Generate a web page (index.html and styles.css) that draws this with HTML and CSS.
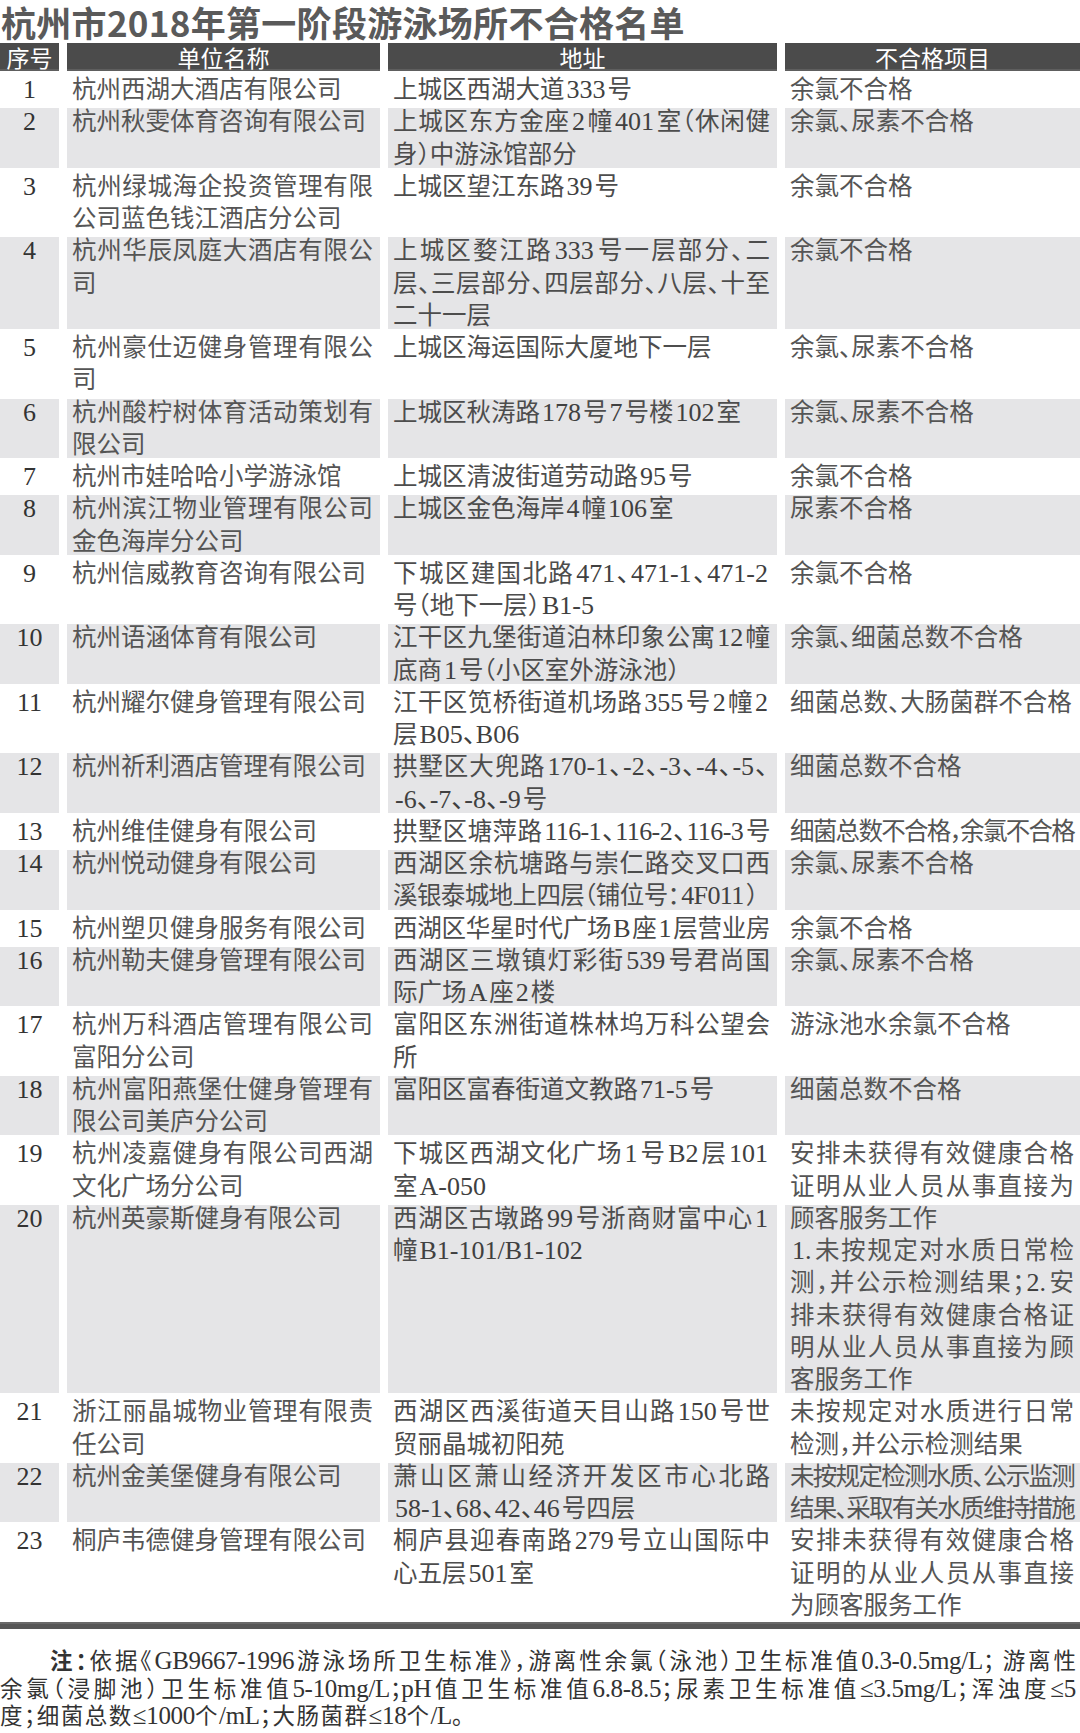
FILE: index.html
```html
<!DOCTYPE html>
<html lang="zh-CN">
<head>
<meta charset="utf-8">
<title>杭州市2018年第一阶段游泳场所不合格名单</title>
<link rel="stylesheet" href="styles.css">
</head>
<body>
<div class="page">
  <h1 class="title">杭州市2018年第一阶段游泳场所不合格名单</h1>
  <div class="row head">
    <div class="h">序号</div><div class="h">单位名称</div><div class="h">地址</div><div class="h">不合格项目</div>
  </div>
  <div class="rows">
    <div class="row">
      <div class="c no">1</div>
      <div class="c nm"><span class="ln">杭州西湖大酒店有限公司</span></div>
      <div class="c ad"><span class="ln">上城区西湖大道<span class="n">333</span>号</span></div>
      <div class="c it"><span class="ln">余氯不合格</span></div>
    </div>
    <div class="row g">
      <div class="c no">2</div>
      <div class="c nm"><span class="ln">杭州秋雯体育咨询有限公司</span></div>
      <div class="c ad"><span class="ln j">上城区东方金座<span class="n">2</span>幢<span class="n">401</span>室（休闲健</span><span class="ln">身）中游泳馆部分</span></div>
      <div class="c it"><span class="ln">余氯、尿素不合格</span></div>
    </div>
    <div class="row">
      <div class="c no">3</div>
      <div class="c nm"><span class="ln j">杭州绿城海企投资管理有限</span><span class="ln">公司蓝色钱江酒店分公司</span></div>
      <div class="c ad"><span class="ln">上城区望江东路<span class="n">39</span>号</span></div>
      <div class="c it"><span class="ln">余氯不合格</span></div>
    </div>
    <div class="row g">
      <div class="c no">4</div>
      <div class="c nm"><span class="ln j">杭州华辰凤庭大酒店有限公</span><span class="ln">司</span></div>
      <div class="c ad"><span class="ln j">上城区婺江路<span class="n">333</span>号一层部分、二</span><span class="ln j">层、三层部分、四层部分、八层、十至</span><span class="ln">二十一层</span></div>
      <div class="c it"><span class="ln">余氯不合格</span></div>
    </div>
    <div class="row">
      <div class="c no">5</div>
      <div class="c nm"><span class="ln j">杭州豪仕迈健身管理有限公</span><span class="ln">司</span></div>
      <div class="c ad"><span class="ln">上城区海运国际大厦地下一层</span></div>
      <div class="c it"><span class="ln">余氯、尿素不合格</span></div>
    </div>
    <div class="row g">
      <div class="c no">6</div>
      <div class="c nm"><span class="ln j">杭州酸柠树体育活动策划有</span><span class="ln">限公司</span></div>
      <div class="c ad"><span class="ln">上城区秋涛路<span class="n">178</span>号<span class="n">7</span>号楼<span class="n">102</span>室</span></div>
      <div class="c it"><span class="ln">余氯、尿素不合格</span></div>
    </div>
    <div class="row">
      <div class="c no">7</div>
      <div class="c nm"><span class="ln">杭州市娃哈哈小学游泳馆</span></div>
      <div class="c ad"><span class="ln">上城区清波街道劳动路<span class="n">95</span>号</span></div>
      <div class="c it"><span class="ln">余氯不合格</span></div>
    </div>
    <div class="row g">
      <div class="c no">8</div>
      <div class="c nm"><span class="ln j">杭州滨江物业管理有限公司</span><span class="ln">金色海岸分公司</span></div>
      <div class="c ad"><span class="ln">上城区金色海岸<span class="n">4</span>幢<span class="n">106</span>室</span></div>
      <div class="c it"><span class="ln">尿素不合格</span></div>
    </div>
    <div class="row">
      <div class="c no">9</div>
      <div class="c nm"><span class="ln">杭州信威教育咨询有限公司</span></div>
      <div class="c ad"><span class="ln j">下城区建国北路<span class="n">471、471-1、471-2</span></span><span class="ln">号（地下一层）<span class="n">B1-5</span></span></div>
      <div class="c it"><span class="ln">余氯不合格</span></div>
    </div>
    <div class="row g">
      <div class="c no">10</div>
      <div class="c nm"><span class="ln">杭州语涵体育有限公司</span></div>
      <div class="c ad"><span class="ln j">江干区九堡街道泊林印象公寓<span class="n">12</span>幢</span><span class="ln">底商<span class="n">1</span>号（小区室外游泳池）</span></div>
      <div class="c it"><span class="ln">余氯、细菌总数不合格</span></div>
    </div>
    <div class="row">
      <div class="c no">11</div>
      <div class="c nm"><span class="ln">杭州耀尔健身管理有限公司</span></div>
      <div class="c ad"><span class="ln j">江干区笕桥街道机场路<span class="n">355</span>号<span class="n">2</span>幢<span class="n">2</span></span><span class="ln">层<span class="n">B05、B06</span></span></div>
      <div class="c it"><span class="ln">细菌总数、大肠菌群不合格</span></div>
    </div>
    <div class="row g">
      <div class="c no">12</div>
      <div class="c nm"><span class="ln">杭州祈利酒店管理有限公司</span></div>
      <div class="c ad"><span class="ln j">拱墅区大兜路<span class="n">170-1、-2、-3、-4、-5、</span></span><span class="ln"><span class="n">-6、-7、-8、-9</span>号</span></div>
      <div class="c it"><span class="ln">细菌总数不合格</span></div>
    </div>
    <div class="row">
      <div class="c no">13</div>
      <div class="c nm"><span class="ln">杭州维佳健身有限公司</span></div>
      <div class="c ad"><span class="ln j c1">拱墅区塘萍路<span class="n">116-1、116-2、116-3</span>号</span></div>
      <div class="c it"><span class="ln j c2">细菌总数不合格，余氯不合格</span></div>
    </div>
    <div class="row g">
      <div class="c no">14</div>
      <div class="c nm"><span class="ln">杭州悦动健身有限公司</span></div>
      <div class="c ad"><span class="ln j">西湖区余杭塘路与崇仁路交叉口西</span><span class="ln c1">溪银泰城地上四层（铺位号：<span class="n">4F011</span>）</span></div>
      <div class="c it"><span class="ln">余氯、尿素不合格</span></div>
    </div>
    <div class="row">
      <div class="c no">15</div>
      <div class="c nm"><span class="ln">杭州塑贝健身服务有限公司</span></div>
      <div class="c ad"><span class="ln j c1">西湖区华星时代广场<span class="n">B</span>座<span class="n">1</span>层营业房</span></div>
      <div class="c it"><span class="ln">余氯不合格</span></div>
    </div>
    <div class="row g">
      <div class="c no">16</div>
      <div class="c nm"><span class="ln">杭州勒夫健身管理有限公司</span></div>
      <div class="c ad"><span class="ln j">西湖区三墩镇灯彩街<span class="n">539</span>号君尚国</span><span class="ln">际广场<span class="n">A</span>座<span class="n">2</span>楼</span></div>
      <div class="c it"><span class="ln">余氯、尿素不合格</span></div>
    </div>
    <div class="row">
      <div class="c no">17</div>
      <div class="c nm"><span class="ln j">杭州万科酒店管理有限公司</span><span class="ln">富阳分公司</span></div>
      <div class="c ad"><span class="ln j">富阳区东洲街道株林坞万科公望会</span><span class="ln">所</span></div>
      <div class="c it"><span class="ln">游泳池水余氯不合格</span></div>
    </div>
    <div class="row g">
      <div class="c no">18</div>
      <div class="c nm"><span class="ln j">杭州富阳燕堡仕健身管理有</span><span class="ln">限公司美庐分公司</span></div>
      <div class="c ad"><span class="ln">富阳区富春街道文教路<span class="n">71-5</span>号</span></div>
      <div class="c it"><span class="ln">细菌总数不合格</span></div>
    </div>
    <div class="row">
      <div class="c no">19</div>
      <div class="c nm"><span class="ln j">杭州凌嘉健身有限公司西湖</span><span class="ln">文化广场分公司</span></div>
      <div class="c ad"><span class="ln j">下城区西湖文化广场<span class="n">1</span>号<span class="n">B2</span>层<span class="n">101</span></span><span class="ln">室<span class="n">A-050</span></span></div>
      <div class="c it"><span class="ln j">安排未获得有效健康合格</span><span class="ln j">证明从业人员从事直接为</span></div>
    </div>
    <div class="row g">
      <div class="c no">20</div>
      <div class="c nm"><span class="ln">杭州英豪斯健身有限公司</span></div>
      <div class="c ad"><span class="ln j">西湖区古墩路<span class="n">99</span>号浙商财富中心<span class="n">1</span></span><span class="ln">幢<span class="n">B1-101/B1-102</span></span></div>
      <div class="c it"><span class="ln">顾客服务工作</span><span class="ln j"><span class="n">1.</span>未按规定对水质日常检</span><span class="ln j">测，并公示检测结果；<span class="n">2.</span>安</span><span class="ln j">排未获得有效健康合格证</span><span class="ln j">明从业人员从事直接为顾</span><span class="ln">客服务工作</span></div>
    </div>
    <div class="row">
      <div class="c no">21</div>
      <div class="c nm"><span class="ln j">浙江丽晶城物业管理有限责</span><span class="ln">任公司</span></div>
      <div class="c ad"><span class="ln j">西湖区西溪街道天目山路<span class="n">150</span>号世</span><span class="ln">贸丽晶城初阳苑</span></div>
      <div class="c it"><span class="ln j">未按规定对水质进行日常</span><span class="ln">检测，并公示检测结果</span></div>
    </div>
    <div class="row g">
      <div class="c no">22</div>
      <div class="c nm"><span class="ln">杭州金美堡健身有限公司</span></div>
      <div class="c ad"><span class="ln j">萧山区萧山经济开发区市心北路</span><span class="ln"><span class="n">58-1、68、42、46</span>号四层</span></div>
      <div class="c it"><span class="ln j c2">未按规定检测水质、公示监测</span><span class="ln j c2">结果、采取有关水质维持措施</span></div>
    </div>
    <div class="row">
      <div class="c no">23</div>
      <div class="c nm"><span class="ln">桐庐韦德健身管理有限公司</span></div>
      <div class="c ad"><span class="ln j">桐庐县迎春南路<span class="n">279</span>号立山国际中</span><span class="ln">心五层<span class="n">501</span>室</span></div>
      <div class="c it"><span class="ln j">安排未获得有效健康合格</span><span class="ln j">证明的从业人员从事直接</span><span class="ln">为顾客服务工作</span></div>
    </div>
  </div>
  <div class="rule"></div>
  <div class="note">
    <span class="nl j first"><b>注：</b>依据《<span class="m">GB9667-1996</span>游泳场所卫生标准》，游离性余氯（泳池）卫生标准值<span class="m">0.3-0.5mg/L</span>； 游离性</span>
    <span class="nl j">余氯（浸脚池）卫生标准值<span class="m">5-10mg/L</span>；<span class="m">pH</span>值卫生标准值<span class="m">6.8-8.5</span>；尿素卫生标准值<span class="m">≤3.5mg/L</span>；浑浊度<span class="m">≤5</span></span>
    <span class="nl wide">度；细菌总数<span class="m">≤1000</span>个<span class="m">/mL</span>；大肠菌群<span class="m">≤18</span>个<span class="m">/L</span>。</span>
  </div>
</div>
</body>
</html>
```

FILE: styles.css
```css
html, body {
  margin: 0;
  padding: 0;
  background: #ffffff;
}

.page {
  width: 1080px;
  font-family: "Liberation Serif", "Noto Sans CJK SC", serif;
  font-feature-settings: "halt";
}

.title {
  margin: 0;
  padding-left: 1px;
  font-family: "Noto Sans CJK SC", sans-serif;
  font-weight: 700;
  font-size: 35px;
  line-height: 43px;
  letter-spacing: 0.3px;
  color: #5a5a5a;
  white-space: nowrap;
}

.row {
  display: grid;
  grid-template-columns: 59px 313px 389px 295px;
  column-gap: 8px;
}

.head {
  height: 28px;
}

.h {
  background: #4b4b4b;
  color: #ffffff;
  font-family: "Noto Sans CJK SC", sans-serif;
  font-size: 23px;
  line-height: 28px;
  text-align: center;
  box-shadow: inset 0 -2px 0 #5e5e5e;
}

.rows {
  padding-top: 3px;
}

.c {
  font-size: 24.5px;
  line-height: 32.25px;
  color: #555555;
}

.g .c {
  background: #e5e5e7;
  box-shadow: inset 0 2px 0 #ffffff, inset 0 -3px 0 #ffffff;
}

.no {
  text-align: center;
  font-size: 26px;
  color: #333333;
}

.nm {
  padding: 0 7px 0 5px;
}

.ad {
  padding: 0 7px 0 5px;
  color: #4d4d4d;
}

.it {
  padding: 0 6px 0 5px;
}

.ln {
  display: block;
  white-space: nowrap;
}

.j {
  text-align: justify;
  text-align-last: justify;
}

.c1 {
  letter-spacing: -0.6px;
}

.c2 {
  letter-spacing: -1.8px;
}

.n {
  font-size: 26px;
  line-height: 0;
  margin: 0 2px;
  color: #404040;
}

.rule {
  height: 7px;
  background: #575757;
  box-shadow: inset 0 2px 0 #6a6a6a;
}

.note {
  padding: 17px 4px 0 0;
  font-size: 22.5px;
  line-height: 27.5px;
  color: #333333;
}

.nl {
  display: block;
  white-space: nowrap;
}

.wide {
  letter-spacing: 1.5px;
}

.first {
  padding-left: 50px;
}

.m {
  font-size: 25px;
  line-height: 0;
  letter-spacing: -0.3px;
}

.note b {
  font-family: "Noto Sans CJK SC", sans-serif;
  font-weight: 700;
}
```
